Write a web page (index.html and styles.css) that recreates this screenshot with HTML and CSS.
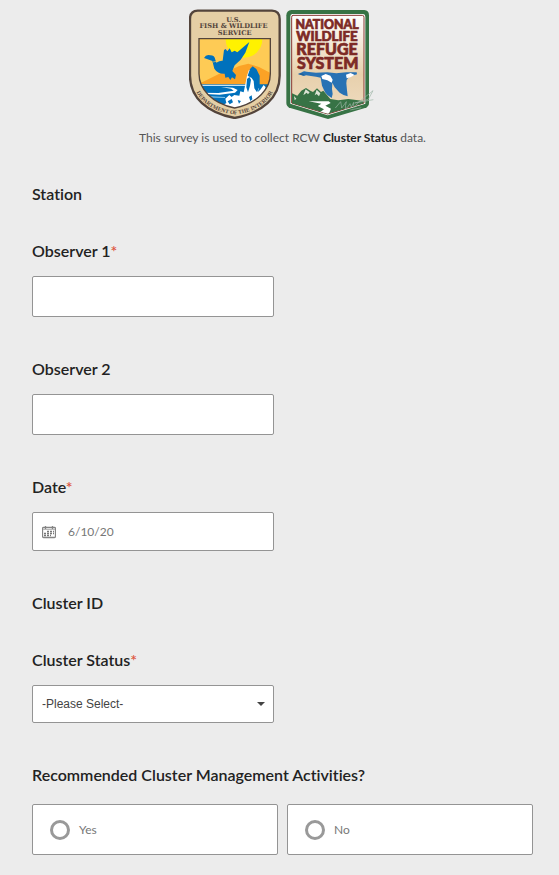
FILE: index.html
```html
<!DOCTYPE html>
<html lang="en">
<head>
<meta charset="utf-8">
<meta name="viewport" content="width=device-width, initial-scale=1">
<title>RCW Cluster Status</title>
<link rel="stylesheet" href="styles.css">
</head>
<body>
<main class="survey">
  <header class="intro">
    <div class="logos">
      <svg class="logo" viewBox="12 12 276 330" role="img" aria-label="U.S. Fish and Wildlife Service">
        <defs>
          <clipPath id="fws-scene"><path d="M42 101H256V206C256 250 220 294 149 309C78 294 42 250 42 206Z"/></clipPath>
          <path id="fws-arc" d="M31 254C50 302 102 324 149 328C196 324 248 302 267 254"/>
        </defs>
        <path d="M38 17H261Q284 18 284 42V212C284 278 232 323 149 339C66 323 15 278 15 212V42Q15 18 38 17Z" fill="#e5cfa5" stroke="#53443b" stroke-width="7"/>
        <g clip-path="url(#fws-scene)">
          <path fill="#fecb55" d="M40 98H260V240H40Z"/>
          <circle cx="177" cy="103" r="55" fill="#fff200"/>
          <path fill="#fba225" d="M40 237L64 226L106 205L132 200L148 190L162 183L190 176L222 186L260 206V245H40Z"/>
          <path fill="#0071bc" d="M40 238H260V320H40Z"/>
          <path fill="#c5e2f5" d="M40 239H185V243H40Z"/>
          <path fill="#fff" d="M108 246L144 248L158 255L150 263L104 269L46 266V263L100 264L146 257L138 251Z"/>
          <path fill="#84c4e9" d="M50 272L120 276V279L56 277Z"/>
          <path fill="#fff" d="M118 320L114 301L124 294L121 281L133 270L140 276L148 270L163 272L166 259L176 262L181 238L186 212L192 194L212 202L222 224L222 250L218 262L226 254L236 240L242 247L236 262L250 262L240 288L214 312Z"/>
          <path fill="#0071bc" d="M188 212L195 192L203 184L214 192L224 212L224 244L216 262L208 250L206 228L200 219ZM184 247L186 222L193 216L198 224L195 242L189 262ZM128 289L140 282L144 292L134 298ZM158 285L168 288L162 296ZM192 276L200 271L202 283L196 288ZM206 292L224 282L214 297L202 302Z"/>
          <path fill="#0071bc" d="M57 159Q63 147 76 151Q89 151 91 164L94 173Q105 166 113 167L117 135L122 132L127 139L134 130L140 142L149 137L157 142L193 111L181 143L167 164L149 181L142 198L153 210L150 223L141 217L136 225L130 216L121 218L119 206Q98 207 88 191L82 168L68 163Z"/>
          <path fill="none" stroke="#fecb55" stroke-width="2" d="M84 171L94 169"/>
        </g>
        <path d="M42 101H256V206C256 250 220 294 149 309C78 294 42 250 42 206Z" fill="none" stroke="#53443b" stroke-width="4"/>
        <text class="fws-title">
          <tspan x="149" y="51">U.S.</tspan>
          <tspan x="149" y="70">FISH &amp; WILDLIFE</tspan>
          <tspan x="149" y="89">SERVICE</tspan>
        </text>
        <text class="fws-dept"><textPath href="#fws-arc" startOffset="50%">DEPARTMENT OF THE INTERIOR</textPath></text>
      </svg>
      <svg class="logo" viewBox="15 12 273 330" role="img" aria-label="National Wildlife Refuge System">
        <defs>
          <linearGradient id="nwr-sky" x1="0" y1="0" x2="0" y2="1">
            <stop offset="0" stop-color="#fff"/>
            <stop offset=".6" stop-color="#e7d0ac"/>
            <stop offset="1" stop-color="#efdcc0"/>
          </linearGradient>
          <clipPath id="nwr-scene"><path d="M36 29H251V295L143 326L36 295Z"/></clipPath>
        </defs>
        <path d="M34 15H253Q267 16 267 31V294Q267 305 255 309L144 342L31 309Q19 305 19 294V31Q20 16 34 15Z" fill="#377345"/>
        <path d="M37 27H249Q256 28 256 35V296L143 331L31 296V35Q31 27 37 27Z" fill="#fff"/>
        <path d="M39 31H247Q252 31 252 37V294L143 327L35 294V37Q35 31 39 31Z" fill="url(#nwr-sky)" stroke="#85362f" stroke-width="3"/>
        <g clip-path="url(#nwr-scene)">
          <path fill="#377345" d="M34 264L52 272L64 257L78 249L91 257L99 261L111 250L123 261L130 257L151 282L175 286L205 282L252 288V330H34Z"/>
          <path fill="#dce4d5" d="M77 253L89 262L84 268L80 263L70 271L73 262ZM110 254L121 265L117 274L110 267L104 271ZM42 273L49 281L44 286Z"/>
          <path fill="#fff" d="M86 289L146 289L152 294L136 302L153 311L145 330L118 323L132 313L113 303L124 296Z"/>
        </g>
        <text class="nwr-title">
          <tspan x="143" y="73" font-size="37">NATIONAL</tspan>
          <tspan x="143" y="109" font-size="40">WILDLIFE</tspan>
          <tspan x="143" y="150" font-size="48">REFUGE</tspan>
          <tspan x="143" y="192" font-size="48">SYSTEM</tspan>
        </text>
        <path fill="#2872b4" d="M54 207L66 202Q71 196 80 200L108 203L142 202L169 205L199 202H230L231 208L207 215Q199 222 199 235L201 256L203 274Q190 271 179 263L164 247L157 233L156 252L158 267L155 279Q141 272 135 262L126 242L122 218L108 215L78 211Q70 216 65 210Z"/>
        <path fill="#fff" d="M124 213L137 207L151 212L158 224L155 233L142 226L127 222ZM198 209L212 204L224 210L211 217L200 220Z"/>
        <path fill="#235f94" d="M54 207L66 205L74 210L65 211Z"/>
        <path fill="none" stroke="#9db5a6" stroke-width="2" d="M166 309L182 290Q184 300 185 309Q192 300 199 290Q195 302 197 312Q204 306 210 296Q212 300 214 307L221 292Q219 303 224 307L232 295L279 257L265 283L224 294L280 284M211 315L244 308"/>
      </svg>
    </div>
    <p class="intro-text">This survey is used to collect RCW <strong>Cluster Status</strong> data.</p>
  </header>

  <form class="form">
    <div class="field field-empty"><p class="label">Station</p></div>
    <div class="field">
      <label class="label" for="observer1">Observer 1<span class="required">*</span></label>
      <input class="control control-text" id="observer1" type="text" required>
    </div>
    <div class="field">
      <label class="label" for="observer2">Observer 2</label>
      <input class="control control-text" id="observer2" type="text">
    </div>
    <div class="field">
      <label class="label" for="date">Date<span class="required">*</span></label>
      <div class="control control-date">
        <svg class="calendar" viewBox="0 0 14 14" aria-hidden="true">
          <rect x=".5" y="2.5" width="13" height="10" rx="1" fill="none" stroke="#858585" stroke-width="1.3"/>
          <path d="M1 4.5H13" stroke="#bbb"/>
          <path d="M3.5 1V4M10.5 1V4" stroke="#858585" stroke-width="1.3"/>
          <path d="M5 6.5H12M2 8.5H12M2 10.5H9" fill="none" stroke="#777" stroke-width="1.3" stroke-dasharray="2 1"/>
        </svg>
        <input class="date-input" id="date" type="text" value="6/10/20" required>
      </div>
    </div>
    <div class="field field-empty"><p class="label">Cluster ID</p></div>
    <div class="field">
      <label class="label" for="status">Cluster Status<span class="required">*</span></label>
      <div class="select">
        <select class="control control-select" id="status" required>
          <option>-Please Select-</option>
        </select>
      </div>
    </div>
    <fieldset class="field choices-field">
      <legend class="label">Recommended Cluster Management Activities?</legend>
      <div class="choices">
        <label class="choice"><input class="radio" type="radio" name="activities" value="yes">Yes</label>
        <label class="choice"><input class="radio" type="radio" name="activities" value="no">No</label>
      </div>
    </fieldset>
  </form>
</main>
</body>
</html>
```
FILE: styles.css
```css
* { box-sizing: border-box; }

body {
  margin: 0;
  background: #ececec;
  color: #222;
  font-family: Lato, "Liberation Sans", sans-serif;
  font-variant-ligatures: none;
}

p { margin: 0; }

.survey { padding: 9px 26px 19px 32px; }

.logos {
  display: flex;
  justify-content: center;
  gap: 4px;
}

.logo {
  display: block;
  height: 110px;
}

.fws-title {
  fill: #53443b;
  font-family: "DejaVu Serif", serif;
  font-size: 20px;
  font-weight: 700;
  text-anchor: middle;
}

.fws-dept {
  fill: #53443b;
  font-family: "Liberation Serif", serif;
  font-size: 17px;
  font-weight: 700;
  text-anchor: middle;
}

.nwr-title {
  fill: #7d2a25;
  stroke: #7d2a25;
  stroke-width: 2px;
  font-family: Lato, sans-serif;
  font-weight: 900;
  text-anchor: middle;
}

.intro-text {
  margin-top: 9px;
  color: #555;
  font-size: 12px;
  line-height: 20px;
  text-align: center;
}

.intro-text strong { color: #222; }

.form { padding-top: 36px; }

.field {
  min-width: 0;
  margin: 0 0 42px;
  padding: 0;
  border: 0;
}

.field-empty { margin-bottom: 37px; }

.label {
  display: block;
  padding: 0;
  font-size: 16px;
  font-weight: 600;
  line-height: 20px;
}

.required {
  color: #dd5540;
  font-weight: 600;
}

.control {
  display: block;
  width: 242px;
  max-width: 100%;
  margin-top: 15px;
  border: 1px solid #949494;
  border-radius: 2px;
  background: #fff;
}

.control-text {
  height: 41px;
  padding: 0 9px;
  font: inherit;
}

.control-date {
  display: flex;
  align-items: center;
  gap: 12px;
  height: 39px;
  padding: 0 9px;
}

.calendar {
  flex: none;
  width: 14px;
  height: 14px;
}

.date-input {
  flex: 1;
  min-width: 0;
  padding: 0;
  border: 0;
  background: transparent;
  color: #777;
  font: 12px Lato, sans-serif;
}

.select {
  position: relative;
  width: 242px;
  max-width: 100%;
}

.select::after {
  content: "";
  position: absolute;
  right: 9px;
  bottom: 17px;
  border: 4px solid transparent;
  border-top-color: #444;
  border-bottom: 0;
  pointer-events: none;
}

.control-select {
  height: 38px;
  padding: 0 9px;
  color: #444;
  font: 12px "Liberation Sans", sans-serif;
  appearance: none;
}

.choices-field { margin-bottom: 0; }

.choices {
  display: grid;
  grid-template-columns: 1fr 1fr;
  gap: 9px;
  margin-top: 19px;
}

.choice {
  display: flex;
  align-items: center;
  gap: 9px;
  height: 51px;
  padding: 0 17px;
  border: 1px solid #949494;
  border-radius: 2px;
  background: #fff;
  color: #777;
  font-size: 12px;
}

.radio {
  width: 20px;
  height: 20px;
  margin: 0;
  border: 3px solid #999;
  border-radius: 50%;
  background: #fff;
  appearance: none;
}

.radio:checked { box-shadow: inset 0 0 0 4px #fff, inset 0 0 0 10px #949494; }
```
